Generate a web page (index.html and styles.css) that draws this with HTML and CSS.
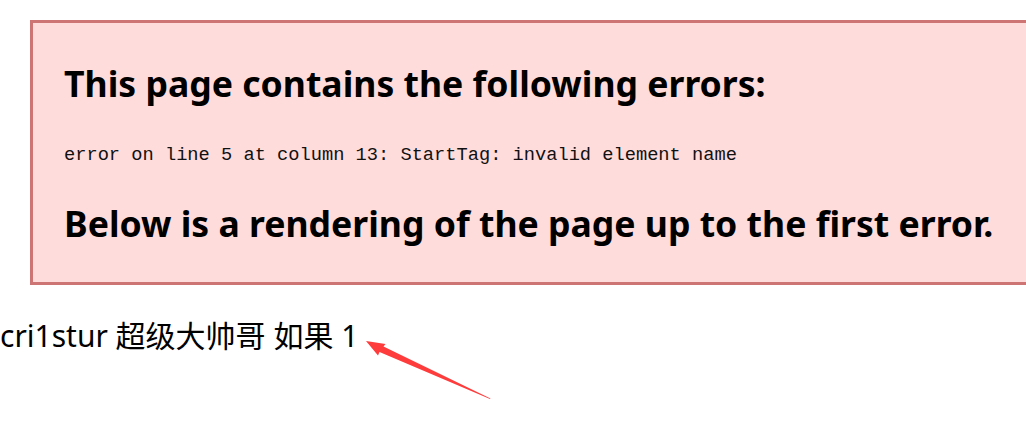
FILE: index.html
```html
<!DOCTYPE html>
<html>
<head>
<meta charset="utf-8">
<link rel="stylesheet" href="styles.css">
</head>
<body>
<div class="page">
  <div class="error-box">
    <h3 class="err-title">This page contains the following errors:</h3>
    <div class="err-msg">error on line 5 at column 13: StartTag: invalid element name</div>
    <h3 class="err-title err-below">Below is a rendering of the page up to the first error.</h3>
  </div>
  <p class="content">cri1stur 超级大帅哥 如果 1</p>
  <svg class="arrow" width="140" height="70" viewBox="0 0 140 70">
    <path d="M6 5 L25.5 8 L23.5 10.5 L130.5 62.5 L130 63 L19.5 16 L18 19.5 Z" fill="#ff3c3c"/>
  </svg>
</div>
</body>
</html>
```
FILE: styles.css
```css
html, body {
  margin: 0;
  padding: 0;
  background: #ffffff;
  overflow: hidden;
}
.page {
  position: relative;
  width: 1026px;
  height: 441px;
  padding-top: 20px;
  box-sizing: border-box;
  overflow: hidden;
}
.error-box {
  margin-left: 30px;
  width: 1100px;
  box-sizing: border-box;
  border: 3px solid #cd7474;
  background: #ffdcdc;
  padding: 36px 31px 35px;
}
.err-title {
  margin: 0;
  font-family: "Noto Sans", "Open Sans", sans-serif;
  font-weight: 700;
  font-size: 35.6px;
  line-height: 48px;
  color: #000;
}
.err-msg {
  margin: 36px 0 32px;
  font-family: "Liberation Mono", monospace;
  font-size: 18.7px;
  line-height: 24px;
  color: #111;
}
.content {
  margin: 31px 0 0;
  font-family: "Noto Sans", "Noto Sans CJK SC", sans-serif;
  font-size: 30px;
  line-height: 40px;
  color: #000;
}
.arrow {
  position: absolute;
  left: 360px;
  top: 336px;
}
```
